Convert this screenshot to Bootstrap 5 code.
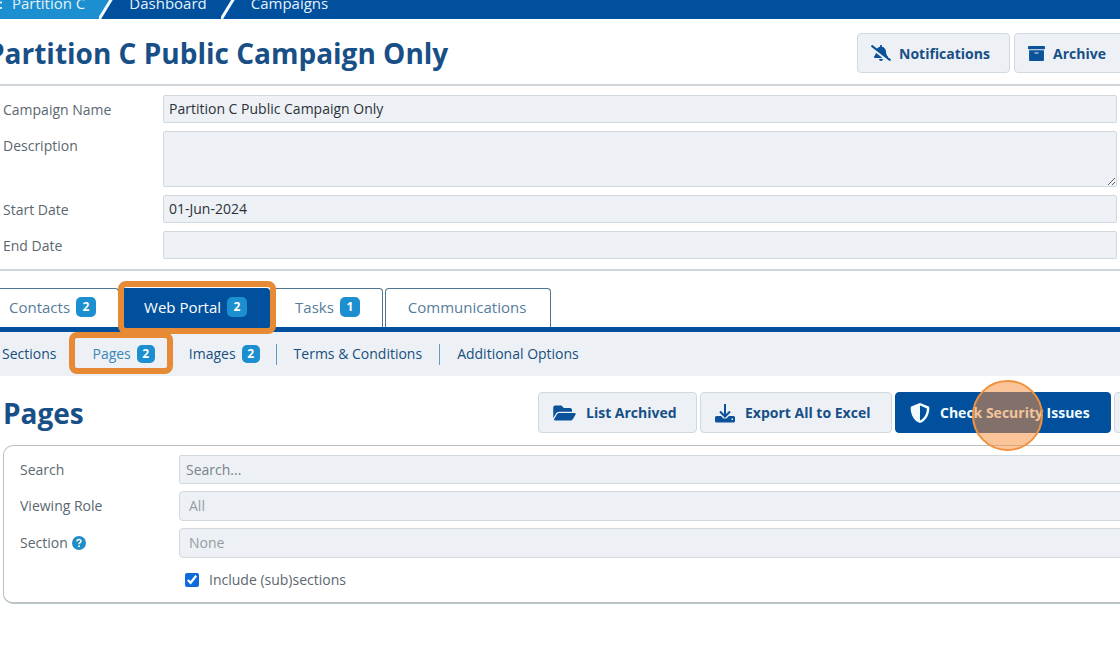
<!DOCTYPE html>
<html lang="en">
<head>
<meta charset="utf-8">
<meta name="viewport" content="width=device-width, initial-scale=1">
<title>Partition C Public Campaign Only</title>
<link href="https://cdn.jsdelivr.net/npm/bootstrap@5.3.0/dist/css/bootstrap.min.css" rel="stylesheet">
<style>
  :root { --navy:#00509d; --ink:#174f86; --sky:#1b8fcf; --field:#edf1f6; --edge:#d0d9e0; --rule:#b9c3c8; --mark:#e68a35; }
  body { font-family:"Open Sans",sans-serif; font-size:14px; line-height:20px; color:#5b6770; background:#fff; overflow-x:hidden; }
  a { text-decoration:none; }

  .crumbs { height:19px; background:var(--navy); font-size:15px; }
  .crumbs a { color:#e6f1fa; line-height:32px; padding:0 14px 0 16px; }
  .crumbs .crumb-home { background:var(--sky); padding:0 14px 0 0; }
  .crumbs svg { width:14px; height:19px; flex:none; }
  .crumbs .crumb-menu { width:12px; background:var(--sky); }

  .page-title { font-size:28px; line-height:40px; font-weight:700; color:var(--ink); }
  .record-head { height:67px; border-bottom:2px solid #cfd6d9; padding-top:14px; margin-left:-13px; margin-right:-14px; }

  .btn-tool { --bs-btn-color:var(--ink); --bs-btn-bg:var(--field); --bs-btn-border-color:var(--edge); --bs-btn-hover-bg:#e0e6ee; --bs-btn-hover-color:var(--ink);
    --bs-btn-font-size:14px; --bs-btn-font-weight:700; --bs-btn-border-radius:4px; --bs-btn-padding-x:13px; --bs-btn-padding-y:0; height:40px; gap:8px; white-space:nowrap; flex:none; }
  .btn-tool.primary { --bs-btn-color:#f1fbff; --bs-btn-bg:var(--navy); --bs-btn-border-color:var(--navy); --bs-btn-hover-bg:#00417f; --bs-btn-hover-color:#fff; }
  .btn-tool svg { fill:#0b529b; flex:none; }
  .btn-tool.primary svg { fill:#f1fbff; }
  .wide-1 { width:153px; } .wide-2 { width:120px; } .wide-3 { width:159px; } .wide-4 { width:192px; } .wide-5 { width:216px; }

  .record { padding:9px 3px 10px; border-bottom:2px solid #cfd6d9; }
  .field-label { width:160px; flex:none; }
  .record .field-label { padding-top:5px; }
  .record .form-control { min-height:28px; padding:3px 5px; }
  .form-control, .form-select { font-size:14px; line-height:20px; color:#2c3238; background-color:var(--field); border-color:var(--edge); border-radius:2px; }
  .record textarea.form-control { height:56px; }
  .record-rows { display:grid; gap:8px; }

  .tabs { margin:17px 0 0 -14px; gap:2px; border-bottom:5px solid var(--navy); font-size:15px; }
  .tab { height:39px; padding:0 22px 2px; border:1px solid #4f7590; border-bottom:0; border-radius:4px 4px 0 0; color:#557d9b; position:relative; }
  .tab.active { background:var(--navy); border-color:var(--navy); color:#fff; }
  .tab + .tab:last-child { padding-right:24px; }
  .count { background:var(--sky); color:#fff; font-weight:700; font-size:12px; line-height:20px; width:20px; border-radius:5px; text-align:center; margin-left:6px; }
  .halo::after { content:""; position:absolute; inset:-8px -7px -7px -4px; border:6px solid var(--mark); border-radius:8px; z-index:2; pointer-events:none; }

  .subtabs { height:44px; background:var(--field); font-weight:500; }
  .subtabs a { color:#174f7d; }
  .subtabs .count { width:18px; line-height:18px; }
  .subtabs .here { color:#3787b8; position:relative; }
  .subtabs .here::after { inset:-12px -18px -10px -23px; }
  .subtabs .bar { width:1px; height:21px; background:#5e9cc4; }
  .subtabs .sec { padding:0 36px 0 2px; } .subtabs .img { padding:0 16px 0 34px; } .subtabs .term { padding:0 17px; }

  .list-head { padding:16px 0 12px 3px; margin-right:-114px; gap:3px; }
  .list-head .btn-tool { height:41px; gap:10px; --bs-btn-padding-x:14px; }
  .tap { position:absolute; width:71px; height:71px; border-radius:50%; left:76px; top:-13px; border:2px solid #f0913f; background:rgba(248,144,60,.52); z-index:3; pointer-events:none; }

  .filters { border:1px solid var(--rule); border-bottom-width:2px; border-radius:10px; margin:0 -20px 0 3px; padding:9px 0 7px 16px; display:grid; gap:7px; }
  .filters .field-label { width:159px; }
  .filters .form-control { height:29px; padding:3px 6px; min-height:0; }
  .filters .form-select { height:30px; padding:3px 9px; color:#949ca3; border-radius:4px; background-image:none; }
  .filters .form-control::placeholder { color:#7b838a; opacity:1; }
  .filters input[type=checkbox] { width:14px; height:14px; margin:0; accent-color:#0c6cdb; }
  .indent { padding-left:165px; height:30px; gap:10px; }
  .help svg { width:14px; height:14px; }
</style>
</head>
<body>
<nav class="crumbs d-flex align-items-end" aria-label="Breadcrumb">
  <svg class="crumb-menu" viewBox="0 0 12 19" aria-hidden="true"><path d="M0 2.500h2M0 8h2" stroke="#d8ecf8" stroke-width="2"/></svg>
  <a href="#" class="crumb-home">Partition C</a>
  <svg viewBox="0 0 14 19" aria-hidden="true"><path d="M0 0H12L0 19z" fill="#1b8fcf"/><path d="M12.500-1L0 19.500" stroke="#f4fbff" stroke-width="3"/></svg>
  <a href="#">Dashboard</a>
  <svg viewBox="0 0 14 19" aria-hidden="true"><path d="M12.500-1L0 19.500" stroke="#f4fbff" stroke-width="3"/></svg>
  <a href="#">Campaigns</a>
</nav>

<header class="record-head d-flex justify-content-between align-items-start">
  <h1 class="page-title m-0 text-nowrap">Partition C Public Campaign Only</h1>
  <div class="d-flex gap-1">
    <button type="button" class="btn btn-tool wide-1 d-flex align-items-center">
      <svg width="20" height="16" viewBox="0 0 640 512" aria-hidden="true"><path d="M633.8 458.1l-90.600-70c.2-1.400.8-2.700.8-4.100 0-7.500-2.600-15.300-8.600-21.700-19.300-20.800-55.500-52-55.500-154.300 0-77.700-54.500-139.900-127.900-155.200V32c0-17.700-14.300-32-32-32s-32 14.300-32 32v20.800c-40.300 8.400-74.700 31.100-97.600 62.600L45.500 3.400C38.500-2 28.400-.8 23 6.200L3.400 31.500C-2 38.400-.8 48.500 6.200 53.900l588.300 454.700c7 5.400 17 4.200 22.500-2.800l19.600-25.300c5.400-6.900 4.200-17-2.800-22.400zM157.200 251.500c-8.600 68-36.400 93.400-52.600 110.800-6 6.400-8.700 14.100-8.600 21.700.1 16.400 13 32 32.100 32h241.100zM320 512c35.300 0 64-28.600 64-64H256c0 35.400 28.700 64 64 64z"/></svg>
      Notifications</button>
    <button type="button" class="btn btn-tool wide-2 d-flex align-items-center">
      <svg width="17" height="17" viewBox="0 0 512 512" aria-hidden="true"><path d="M32 448c0 17.700 14.300 32 32 32h384c17.700 0 32-14.300 32-32V160H32zm160-212c0-6.600 5.400-12 12-12h104c6.600 0 12 5.400 12 12v8c0 6.600-5.400 12-12 12H204c-6.600 0-12-5.400-12-12zM480 32H32C14.300 32 0 46.300 0 64v48c0 8.800 7.200 16 16 16h480c8.800 0 16-7.200 16-16V64c0-17.700-14.300-32-32-32z"/></svg>
      Archive</button>
  </div>
</header>

<form class="record">
  <div class="record-rows">
    <div class="d-flex"><label class="field-label" for="cname">Campaign Name</label><input id="cname" class="form-control" value="Partition C Public Campaign Only"></div>
    <div class="d-flex"><label class="field-label" for="cdesc">Description</label><textarea id="cdesc" class="form-control"></textarea></div>
    <div class="d-flex"><label class="field-label" for="cstart">Start Date</label><input id="cstart" class="form-control" value="01-Jun-2024"></div>
    <div class="d-flex"><label class="field-label" for="cend">End Date</label><input id="cend" class="form-control"></div>
  </div>
</form>

<nav class="tabs d-flex" aria-label="Campaign areas">
  <a href="#" class="tab d-flex align-items-center">Contacts <span class="count">2</span></a>
  <a href="#" class="tab active halo d-flex align-items-center" aria-current="page">Web Portal <span class="count">2</span></a>
  <a href="#" class="tab d-flex align-items-center">Tasks <span class="count">1</span></a>
  <a href="#" class="tab d-flex align-items-center">Communications</a>
</nav>
<nav class="subtabs d-flex align-items-center" aria-label="Web portal areas">
  <a href="#" class="sec">Sections</a>
  <a href="#" class="here halo d-flex align-items-center">Pages <span class="count">2</span></a>
  <a href="#" class="img d-flex align-items-center">Images <span class="count">2</span></a>
  <span class="bar"></span>
  <a href="#" class="term">Terms &amp; Conditions</a>
  <span class="bar"></span>
  <a href="#" class="term">Additional Options</a>
</nav>

<main>
  <div class="list-head d-flex align-items-center">
    <h2 class="page-title m-0 me-auto">Pages</h2>
    <button type="button" class="btn btn-tool wide-3 d-flex align-items-center">
      <svg width="23" height="20" viewBox="0 0 576 512" aria-hidden="true"><path d="M572.700 292.100L500.300 416.200A64 64 0 0 1 445 448H45c-18.500 0-30-20-20.700-36l72.400-124.200A64 64 0 0 1 152 256h400c18.500 0 30 20 20.700 36.100zM152 224h328v-48c0-26.500-21.500-48-48-48H272l-64-64H48C21.500 64 0 85.500 0 112v278l69-118.400C86.200 242.200 118 224 152 224z"/></svg>
      List Archived</button>
    <button type="button" class="btn btn-tool wide-4 d-flex align-items-center">
      <svg width="20" height="20" viewBox="0 0 20 20" aria-hidden="true"><path d="M1.500 13h4.500l2.500 2.500h3L14 13h4.500q1.500 0 1.500 1.500v3.500q0 1.500-1.500 1.500h-17Q0 19.500 0 18v-3.500Q0 13 1.500 13zM16.500 15.500v1.500h1.500v-1.500z"/><path d="M10 1v12M5 8.500l5 5 5-5" fill="none" stroke="#0b529b" stroke-width="2"/></svg>
      Export All to Excel</button>
    <button type="button" class="btn btn-tool primary wide-5 position-relative d-flex align-items-center">
      <svg width="20" height="20" viewBox="0 0 512 512" aria-hidden="true"><path d="M466.500 83.700l-192-80a48 48 0 0 0-37 0l-192 80C27.700 91 16 108.600 16 128c0 198.500 114.500 335.700 221.500 380.300 11.800 4.900 25.100 4.900 37 0C360 472.600 496 349.300 496 128c0-19.400-11.700-36.900-29.500-44.300zM256 446.300V65.300l176 73.300c-3.300 151.400-82.100 261-176 307.700z"/></svg>
      Check Security Issues<span class="tap"></span></button>
    <button type="button" class="btn btn-tool wide-2" aria-label="More"></button>
  </div>

  <form class="filters">
    <div class="d-flex align-items-center"><label class="field-label" for="fs">Search</label><input id="fs" class="form-control" placeholder="Search..."></div>
    <div class="d-flex align-items-center"><label class="field-label" for="fr">Viewing Role</label><select id="fr" class="form-select"><option>All</option></select></div>
    <div class="d-flex align-items-center"><label class="field-label d-flex align-items-center gap-1" for="fn">Section
      <span class="help d-flex"><svg viewBox="0 0 14 14" aria-hidden="true"><circle cx="7" cy="7" r="7" fill="#1f8dc6"/><path d="M5 5.500C5 3 9 3 9 5.300 9 6.700 7 6.700 7 8.300" fill="none" stroke="#fff" stroke-width="1.500"/><circle cx="7" cy="10.300" r="1" fill="#fff"/></svg></span></label>
      <select id="fn" class="form-select"><option>None</option></select></div>
    <div class="indent d-flex align-items-center"><input type="checkbox" id="sub" checked><label for="sub">Include (sub)sections</label></div>
  </form>
</main>
<script src="https://cdn.jsdelivr.net/npm/bootstrap@5.3.0/dist/js/bootstrap.bundle.min.js"></script>
</body>
</html>
